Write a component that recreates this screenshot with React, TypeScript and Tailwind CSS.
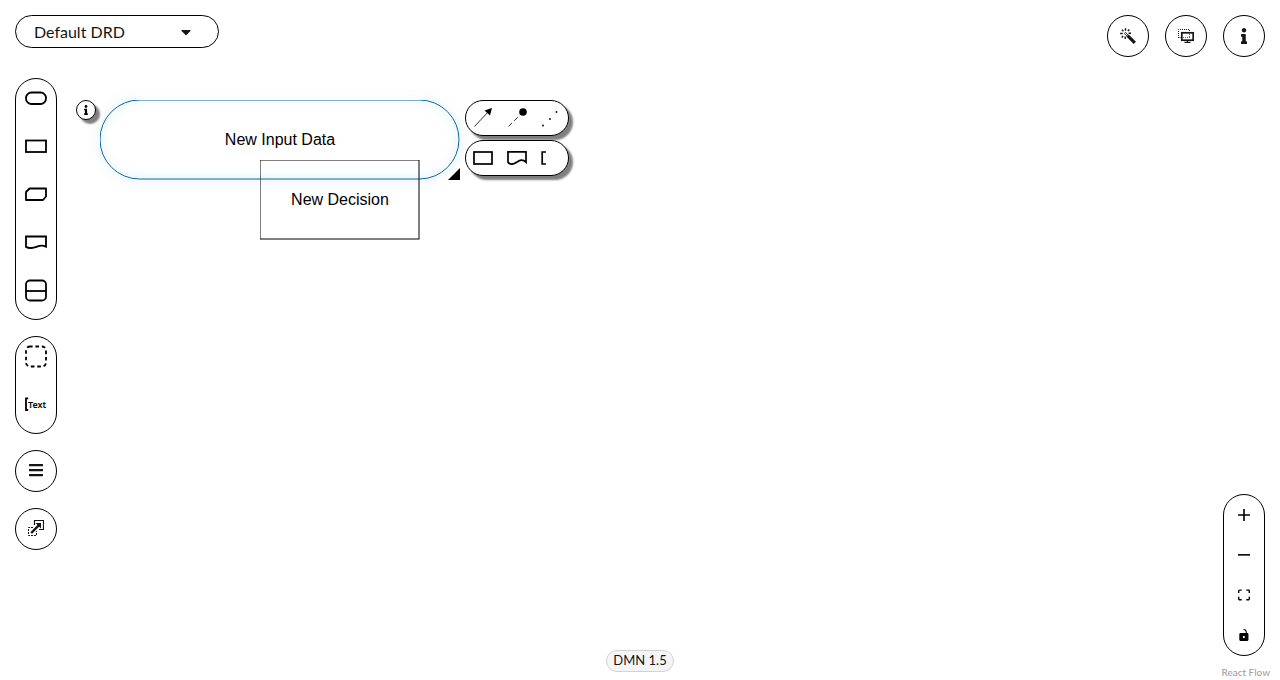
import React from "react";
import { FaBars, FaCaretDown, FaInfo } from "react-icons/fa";

const round =
  "flex h-[42px] w-[42px] items-center justify-center rounded-full border border-black bg-white text-[#151515]";
const palette = "flex w-[42px] flex-col rounded-full border border-black bg-white";
const paletteButton = "mb-[10px] flex h-[38px] items-center justify-center";
const controlButton = "flex h-10 items-center justify-center";
const nodeBar =
  "flex h-9 w-[104px] rounded-full border border-black bg-white shadow-[4px_4px_2px_0px_rgba(0,0,0,0.5)]";
const nodeButton = "flex flex-1 items-center justify-center";

function Outline({ w, h, children }: { w: number; h: number; children: React.ReactNode }) {
  return (
    <svg width={w} height={h} viewBox={`0 0 ${w} ${h}`} fill="none" stroke="black" strokeWidth="2" aria-hidden="true">
      {children}
    </svg>
  );
}

function WandIcon() {
  return (
    <svg width="16" height="16" viewBox="0 0 16 16" fill="none" stroke="#151515" aria-hidden="true">
      <path d="M7.6 7.6L14.8 14.8" strokeWidth="3.2" />
      <path d="M4.3 5.4L5.4 4.3L8.3 7.2L7.2 8.3Z" strokeWidth="0.9" />
      <path
        d="M5.5 0.3V2.7M2 1.6L3.4 3.2M9.4 1.4L7.8 3.1M0.2 5.5H2.7M8.6 5.2H11M1.6 9.4L3.2 7.9M5.2 8.6V11"
        strokeWidth="1.4"
      />
    </svg>
  );
}

function OverlayIcon() {
  return (
    <svg width="16" height="14" viewBox="0 0 16 14" fill="none" stroke="#151515" aria-hidden="true">
      <path d="M0.5 9V0.5H11.5V3M0.5 8.5H3" strokeDasharray="1 1" />
      <rect x="3.8" y="3.8" width="11.4" height="7.4" strokeWidth="1.7" />
      <path d="M5 8.5H12.5M11.5 5V8" strokeDasharray="1 1" strokeWidth="0.7" />
      <path d="M9.5 11V13.5M6.5 13.4H12.5" strokeWidth="1.2" />
    </svg>
  );
}

function ExpandIcon() {
  return (
    <svg width="16" height="16" viewBox="0 0 16 16" fill="none" stroke="#151515" aria-hidden="true">
      <path d="M6.5 5V0.5H15.5V9.5H11" strokeWidth="1.2" />
      <path d="M5 7.5H0.5V15.5H8.5V11" strokeDasharray="2 1" />
      <path d="M3.2 13L11 5.2" strokeWidth="2.4" />
      <path d="M7.5 3H13V8.5Z" fill="#151515" stroke="none" />
    </svg>
  );
}

function Diagram() {
  return (
    <main className="absolute inset-0 overflow-hidden font-['Liberation_Sans',sans-serif] text-base text-black">
      <div className="absolute left-[100px] top-[100px] flex h-20 w-[360px] items-center justify-center">
        <svg
          width="360"
          height="80"
          className="absolute inset-0 drop-shadow-[0_0_5px_rgba(0,107,164,0.5)]"
          fill="none"
          aria-hidden="true"
        >
          <rect width="359" height="79" rx="39.5" stroke="#006ba4" />
        </svg>
        <span className="relative">New Input Data</span>
        <svg width="12" height="12" className="absolute bottom-0 right-0" aria-hidden="true">
          <path d="M12 0V12H0Z" />
        </svg>
      </div>
      <div className="absolute left-[260px] top-[160px] flex h-20 w-40 items-center justify-center">
        <svg width="160" height="80" className="absolute inset-0" fill="none" aria-hidden="true">
          <rect width="159" height="79" stroke="black" />
        </svg>
        <span className="relative">New Decision</span>
      </div>
      <button
        aria-label="Node properties"
        className="absolute left-[76px] top-[100px] flex h-5 w-5 items-center justify-center rounded-full border border-black bg-white shadow-[4px_4px_2px_0px_rgba(0,0,0,0.5)]"
      >
        <FaInfo size={10} />
      </button>
      <div className="absolute left-[465px] top-[100px] flex flex-col gap-1">
        <div className={nodeBar}>
          <button aria-label="Add information requirement" className={nodeButton}>
            <svg width="20" height="20" viewBox="0 0 20 20" stroke="black" aria-hidden="true">
              <path d="M1.5 18.5L15 4" strokeWidth="0.8" />
              <path d="M19 0L17 7.5L11.5 2.5Z" stroke="none" />
            </svg>
          </button>
          <button aria-label="Add authority requirement" className={nodeButton}>
            <svg width="20" height="20" viewBox="0 0 20 20" stroke="black" aria-hidden="true">
              <path d="M1.5 18.5L15 5" strokeWidth="0.8" strokeDasharray="5 3" />
              <circle cx="16" cy="4" r="3.8" stroke="none" />
            </svg>
          </button>
          <button aria-label="Add association" className={nodeButton}>
            <svg width="20" height="20" viewBox="0 0 20 20" aria-hidden="true">
              <circle cx="2" cy="17.5" r="0.9" />
              <circle cx="9" cy="11" r="0.9" />
              <circle cx="15.5" cy="4" r="0.9" />
            </svg>
          </button>
        </div>
        <div className={nodeBar}>
          <button aria-label="Add decision" className={nodeButton}>
            <Outline w={20} h={14}>
              <rect x="1" y="1" width="18" height="12" strokeWidth="1.7" />
            </Outline>
          </button>
          <button aria-label="Add knowledge source" className={nodeButton}>
            <Outline w={20} h={14}>
              <path d="M1 0.8H19V11.2C13 5.5 10 13.5 4.5 13.2Q2 12.8 1 11.2Z" strokeWidth="1.7" />
            </Outline>
          </button>
          <button aria-label="Add text annotation" className={nodeButton}>
            <Outline w={20} h={14}>
              <path d="M5 1H1.2V13H5" strokeWidth="1.7" />
            </Outline>
          </button>
        </div>
      </div>
    </main>
  );
}

export default function App() {
  return (
    <div className="relative grid min-h-screen grid-cols-[1fr_auto_1fr] bg-white p-[15px] font-[Lato,sans-serif] text-[#151515]">
      <Diagram />

      <aside className="relative flex flex-col items-start gap-4 justify-self-start">
        <div className="mb-[14px] grid items-center">
          <select
            aria-label="Diagram"
            className="col-start-1 row-start-1 h-[33px] w-[204px] appearance-none rounded-full border border-black bg-white pl-[18px] text-base leading-5"
          >
            <option>Default DRD</option>
          </select>
          <FaCaretDown size={16} className="pointer-events-none col-start-1 row-start-1 mr-[25px] justify-self-end" />
        </div>
        <div className={palette}>
          <button aria-label="Input data" className={paletteButton}>
            <Outline w={22} h={14}>
              <rect x="1" y="1.5" width="20" height="11.5" rx="5.5" strokeWidth="1.8" />
            </Outline>
          </button>
          <button aria-label="Decision" className={paletteButton}>
            <Outline w={22} h={14}>
              <rect x="1" y="1.5" width="20" height="11.5" strokeWidth="1.8" />
            </Outline>
          </button>
          <button aria-label="Business knowledge model" className={paletteButton}>
            <Outline w={22} h={14}>
              <path d="M4.5 1.5H21V9.5L18 13H1V5Z" strokeLinejoin="round" strokeWidth="1.8" />
            </Outline>
          </button>
          <button aria-label="Knowledge source" className={paletteButton}>
            <Outline w={22} h={14}>
              <path d="M1 1.5H21V11.7C14.5 8 12 13.5 5.5 13Q3 13 1 11.9Z" strokeWidth="1.8" />
            </Outline>
          </button>
          <button aria-label="Decision service" className={paletteButton}>
            <Outline w={22} h={23}>
              <rect x="1" y="1.5" width="20" height="20" rx="4" strokeWidth="1.8" />
              <path d="M1 12H21" strokeWidth="1.8" />
            </Outline>
          </button>
        </div>
        <div className={palette}>
          <button aria-label="Group" className={paletteButton}>
            <Outline w={22} h={23}>
              <rect x="1" y="1.5" width="20" height="20" rx="4" strokeWidth="1.8" strokeDasharray="3.6 2.8" strokeDashoffset="1" />
            </Outline>
          </button>
          <button aria-label="Text annotation" className={paletteButton}>
            <svg width="22" height="14" viewBox="0 0 22 14" className="overflow-visible" aria-hidden="true">
              <path d="M3.2 1.4H1V13H3.2" fill="none" stroke="black" strokeWidth="1.8" />
              <text x="3" y="11" className="font-['Noto_Sans',sans-serif] text-[9px] font-semibold">
                Text
              </text>
            </svg>
          </button>
        </div>
        <button aria-label="Open nodes" className={`${round} pb-[2px]`}>
          <FaBars size={16} />
        </button>
        <button aria-label="External nodes" className={`${round} pb-[2px]`}>
          <ExpandIcon />
        </button>
      </aside>

      <footer className="relative -mb-[7px] self-end">
        <span className="flex h-[22px] items-center rounded-full border border-[#d2d2d2] bg-[#f5f5f5] px-[6px] text-[13px]">
          DMN 1.5
        </span>
      </footer>

      <aside className="relative flex flex-col items-end justify-between justify-self-end">
        <div className="flex gap-4">
          <button aria-label="Autolayout" className={round}>
            <WandIcon />
          </button>
          <button aria-label="Overlays" className={round}>
            <OverlayIcon />
          </button>
          <button aria-label="Properties" className={round}>
            <FaInfo size={16} />
          </button>
        </div>
        <div className="-mb-[15px] flex flex-col items-end">
          <div className={palette}>
            <button aria-label="Zoom in" className={controlButton}>
              <svg width="12" height="12" viewBox="0 0 32 32" aria-hidden="true">
                <path d="M32 18.133H18.133V32h-4.266V18.133H0v-4.266h13.867V0h4.266v13.867H32z" />
              </svg>
            </button>
            <button aria-label="Zoom out" className={controlButton}>
              <svg width="12" height="2" viewBox="0 0 32 5" aria-hidden="true">
                <path d="M0 0h32v4.2H0z" />
              </svg>
            </button>
            <button aria-label="Fit view" className={controlButton}>
              <svg width="12" height="12" viewBox="0 0 32 30" aria-hidden="true">
                <path d="M3.692 4.63c0-.53.4-.938.939-.938h5.215V0H4.708C2.13 0 0 2.054 0 4.63v5.216h3.692V4.631zM27.354 0h-5.2v3.692h5.17c.53 0 .984.4.984.939v5.215H32V4.631A4.624 4.624 0 0027.354 0zm.954 24.83c0 .532-.4.94-.939.94h-5.215v3.768h5.215c2.577 0 4.631-2.13 4.631-4.707v-5.139h-3.692v5.139zm-23.677.94c-.531 0-.939-.4-.939-.94v-5.138H0v5.139c0 2.577 2.13 4.707 4.708 4.707h5.138V25.77H4.631z" />
              </svg>
            </button>
            <button aria-label="Toggle interactivity" className={controlButton}>
              <svg width="12" height="12" viewBox="0 0 25 32" aria-hidden="true">
                <path d="M21.333 10.667H19.81V7.619C19.81 3.429 16.38 0 12.19 0c-4.114 1.828-1.37 2.133.305 2.438 1.676.305 4.42 2.59 4.42 5.181v3.048H3.047A3.056 3.056 0 000 13.714v15.238A3.056 3.056 0 003.048 32h18.285a3.056 3.056 0 003.048-3.048V13.714a3.056 3.056 0 00-3.048-3.047zM12.19 24.533a3.056 3.056 0 01-3.047-3.047 3.056 3.056 0 013.047-3.048 3.056 3.056 0 013.048 3.048 3.056 3.056 0 01-3.048 3.047z" />
              </svg>
            </button>
          </div>
          <a href="#react-flow" className="-mr-[5px] mt-2 block text-[10px] leading-4 text-[#999999]">
            React Flow
          </a>
        </div>
      </aside>
    </div>
  );
}
